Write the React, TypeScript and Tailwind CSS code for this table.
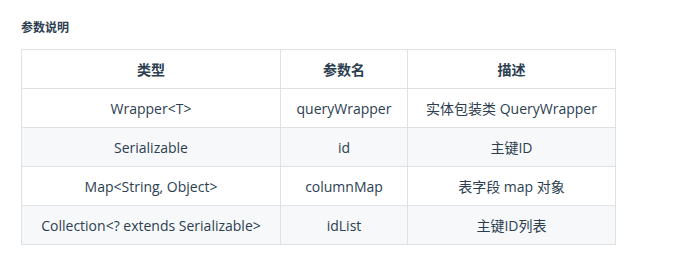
const rows = [
  ['Wrapper<T>', 'queryWrapper', '实体包装类 QueryWrapper'],
  ['Serializable', 'id', '主键ID'],
  ['Map<String, Object>', 'columnMap', '表字段 map 对象'],
  ['Collection<? extends Serializable>', 'idList', '主键ID列表'],
];

export default function App() {
  return (
    <div
      className="w-[678px] h-[263px] bg-white text-[#2c3e50] pl-[21px] pt-[20px]"
      style={{ fontFamily: '"Open Sans", "Noto Sans CJK SC", sans-serif' }}
    >
      <h4 className="text-[12px] font-bold leading-[16px] h-[29px]">参数说明</h4>
      <table className="border-collapse text-[14px]">
        <thead>
          <tr className="h-[39px]">
            <th className="w-[259px] border border-[#dfe2e5] font-bold text-center">类型</th>
            <th className="w-[127px] border border-[#dfe2e5] font-bold text-center">参数名</th>
            <th className="w-[208px] border border-[#dfe2e5] font-bold text-center">描述</th>
          </tr>
        </thead>
        <tbody>
          {rows.map((r, i) => (
            <tr key={i} className={`h-[39px] ${i % 2 === 1 ? 'bg-[#f6f8fa]' : ''}`}>
              {r.map((c, j) => (
                <td key={j} className="border border-[#dfe2e5] text-center">
                  {c}
                </td>
              ))}
            </tr>
          ))}
        </tbody>
      </table>
    </div>
  );
}
